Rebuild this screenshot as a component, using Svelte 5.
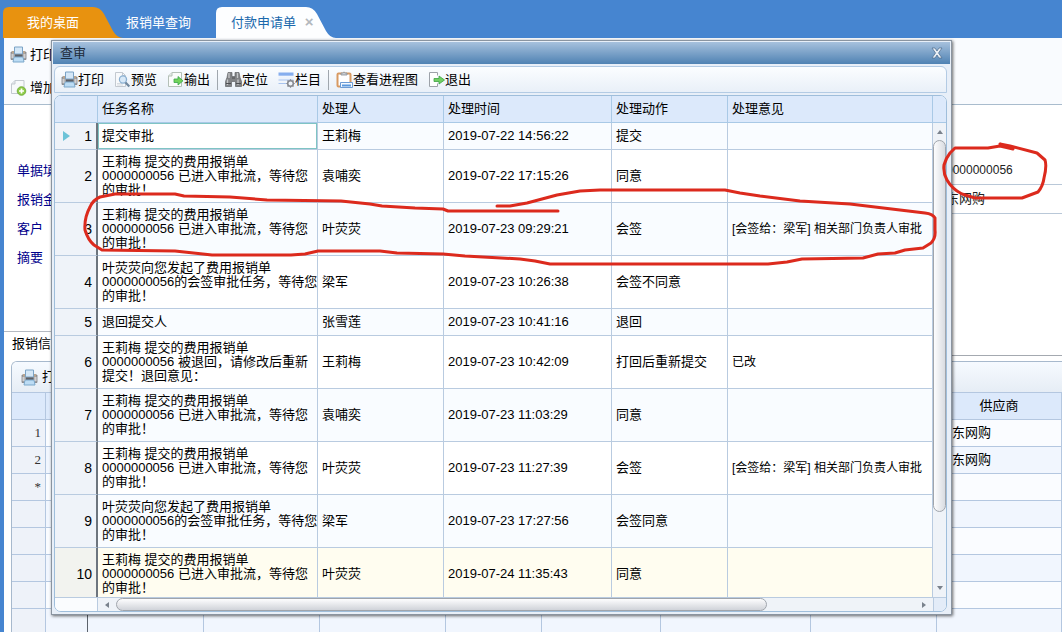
<!--
  Payment request page with the approval history window open
-->
<script lang="ts">
  type Step = {
    task: string;
    user: string;
    time: string;
    action: string;
    note?: string;
  };

  const submitted = '王莉梅 提交的费用报销单\n0000000056 已进入审批流，等待您\n的审批！';
  const countersign = '叶荧荧向您发起了费用报销单\n0000000056的会签审批任务，等待您\n的审批！';
  const returned = '王莉梅 提交的费用报销单\n0000000056 被退回，请修改后重新\n提交！退回意见：';

  const steps: Step[] = [
    { task: '提交审批', user: '王莉梅', time: '2019-07-22 14:56:22', action: '提交' },
    { task: submitted, user: '袁哺奕', time: '2019-07-22 17:15:26', action: '同意' },
    { task: submitted, user: '叶荧荧', time: '2019-07-23 09:29:21', action: '会签', note: '[会签给：梁军] 相关部门负责人审批' },
    { task: countersign, user: '梁军', time: '2019-07-23 10:26:38', action: '会签不同意' },
    { task: '退回提交人', user: '张雪莲', time: '2019-07-23 10:41:16', action: '退回' },
    { task: returned, user: '王莉梅', time: '2019-07-23 10:42:09', action: '打回后重新提交', note: '已改' },
    { task: submitted, user: '袁哺奕', time: '2019-07-23 11:03:29', action: '同意' },
    { task: submitted, user: '叶荧荧', time: '2019-07-23 11:27:39', action: '会签', note: '[会签给：梁军] 相关部门负责人审批' },
    { task: countersign, user: '梁军', time: '2019-07-23 17:27:56', action: '会签同意' },
    { task: submitted, user: '叶荧荧', time: '2019-07-24 11:35:43', action: '同意' }
  ];

  const tools = [
    [
      { icon: 'print', text: '打印' },
      { icon: 'preview', text: '预览' },
      { icon: 'export', text: '输出' }
    ],
    [
      { icon: 'locate', text: '定位' },
      { icon: 'columns', text: '栏目' }
    ],
    [
      { icon: 'flow', text: '查看进程图' },
      { icon: 'exit', text: '退出' }
    ]
  ];

  const lines = [
    { no: '1', supplier: '京东网购' },
    { no: '2', supplier: '京东网购' },
    { no: '*', supplier: '' },
    { no: '', supplier: '' },
    { no: '', supplier: '' },
    { no: '', supplier: '' },
    { no: '', supplier: '' },
    { no: '', supplier: '' }
  ];
</script>

{#snippet icon(name: string)}
  <svg class="icon" viewBox="0 0 17 17" aria-hidden="true">
    {#if name === 'print'}
      <path d="M1 6h15v7.500H1z" fill="#a3a3a5" stroke="#808286" stroke-width=".8" />
      <path d="M2 5h13v2.500H2z" fill="#b9a58f" />
      <path d="M4.500 1h8v7h-8z" fill="#d4e7f7" stroke="#7ba3c6" />
      <path d="M5 8.500h7.500v2.500H5z" fill="#5c6068" />
      <path d="M4 11h9l1 5H3z" fill="#bcdcf4" stroke="#7ba7ca" />
      <path d="M1.500 8h2v4h-2zM13.500 8h2v4h-2z" fill="#d0d0d2" />
    {:else if name === 'preview'}
      <path d="M1.500 1.500h7l3 3v11h-10z" fill="#f7f9fb" stroke="#c3c9d0" />
      <path d="M8.500 1.500v3h3" fill="none" stroke="#c3c9d0" />
      <path d="M3 12.500h5M3 14h6" stroke="#d5dadf" />
      <circle cx="9" cy="8.500" r="3.600" fill="#cfe5f7" fill-opacity=".8" stroke="#8ab0d2" stroke-width="1.200" />
      <path d="M11.500 11.500l3.800 4" stroke="#70889f" stroke-width="2.200" />
    {:else if name === 'export'}
      <path d="M5 1.500h9.500v14H1.500V5z" fill="#fbfcfb" stroke="#b4c0b7" />
      <path d="M5 1.500V5H1.500" fill="#e4ece6" stroke="#b4c0b7" />
      <path d="M7 8h4V5.500l5 4.300-5 4.200v-2.500H7z" fill="#72d45b" stroke="#3aa64a" stroke-width=".8" />
    {:else if name === 'locate'}
      <path d="M3 1.500h4v4h3v-4h4l1 5 1.500 4v5h-6v-5h-4v5H.500v-5L2 6.500z" fill="#808285" stroke="#626467" stroke-width=".7" />
      <path d="M4 2v5M12.500 2v5M2.500 8.500v5.500M13 8.500v5.500" stroke="#c5c7c9" stroke-width="1.300" />
      <path d="M1 12.500h5M11 12.500h5M7 7h3" stroke="#4c4e51" />
    {:else if name === 'columns'}
      <path d="M.500 1.500h15v3.200H.500z" fill="#86aeee" />
      <path d="M.500 5.500h15v3H.500z" fill="#edf3fc" />
      <path d="M.500 9h15M.500 12.500h8" stroke="#a9c4ee" />
      <circle cx="12.500" cy="12.500" r="2.800" fill="none" stroke="#85888e" stroke-width="1.500" />
      <path d="M12.500 8.300v1.500M12.500 15.200v1.500M8.300 12.500h1.500M15.200 12.500h1.500M9.500 9.500l1 1M14.500 14.500l1 1M15.500 9.500l-1 1M10.500 14.500l-1 1" stroke="#85888e" stroke-width="1.200" />
    {:else if name === 'flow'}
      <rect x="1.500" y="2.500" width="13" height="13" rx="1" fill="#fff" stroke="#d89a62" stroke-width="2" />
      <path d="M5 4V2h1.500Q8 0 9.500 2H11v2z" fill="#c9cdd2" stroke="#888d94" stroke-width=".8" />
      <path d="M4.500 11.500h12v5h-12z" fill="#f4f9ff" stroke="#6c9bd4" />
      <path d="M6 14.500h9" stroke="#5b98dd" stroke-width="2" />
    {:else if name === 'exit'}
      <path d="M9.500 4.500v-3h-8v14h8v-3" fill="#fff" stroke="#9da2a9" />
      <path d="M6 7.500h5V5l5.500 4-5.500 4v-2.500H6z" fill="#72d064" stroke="#3ea244" stroke-width=".8" />
    {:else if name === 'add'}
      <path d="M5 1.500h9v13H1.500V5z" fill="#f7f9fb" stroke="#c3c9d0" />
      <path d="M5 1.500V5H1.500" fill="#e3e7eb" stroke="#c3c9d0" />
      <circle cx="11.500" cy="12" r="4.300" fill="#8ecb48" stroke="#68a634" stroke-width=".8" />
      <path d="M11.500 9.500v5M9 12h5" stroke="#fff" stroke-width="1.700" />
    {/if}
  </svg>
{/snippet}

<div class="app">
  <nav class="tabs">
    <button class="tab tab-home">我的桌面</button>
    <button class="tab tab-plain">报销单查询</button>
    <button class="tab tab-active">付款申请单 <span class="tab-close">×</span></button>
  </nav>

  <main class="page">
    <div class="page-tools">
      <button class="tool">{@render icon('print')}打印</button>
      <button class="tool">{@render icon('add')}增加</button>
    </div>

    <form class="form">
      <div class="field-row">
        <label for="f-date">单据填</label>
        <input id="f-date" />
        <input class="side" value="0000000056" aria-label="单据编号" />
      </div>
      <div class="field-row">
        <label for="f-amount">报销金</label>
        <input id="f-amount" />
        <input class="side side-name" value="京东网购" aria-label="供应商" />
      </div>
      <div class="field-row half">
        <label for="f-client">客户</label>
        <input id="f-client" />
      </div>
      <div class="field-row half">
        <label for="f-summary">摘要</label>
        <input id="f-summary" />
      </div>
    </form>

    <div class="section-tabs"><button class="section-tab">报销信息</button></div>

    <section class="detail">
      <div class="detail-tools">
        <button class="tool">{@render icon('print')}打印</button>
      </div>
      <table class="lines">
        <colgroup>
          <col class="l-no" /><col class="l-a" /><col class="l-b" /><col class="l-b" /><col class="l-c" />
          <col class="l-d" /><col class="l-e" /><col class="l-f" /><col class="l-c" /><col />
        </colgroup>
        <thead>
          <tr>
            {#each Array(9) as _}<th></th>{/each}
            <th>供应商</th>
          </tr>
        </thead>
        <tbody>
          {#each lines as line}
            <tr>
              <td class="line-no">{line.no}</td>
              {#each Array(8) as _}<td></td>{/each}
              <td>{line.supplier}</td>
            </tr>
          {/each}
        </tbody>
      </table>
    </section>
  </main>

  <div class="dialog" role="dialog" aria-labelledby="dialog-title">
    <header class="dialog-head">
      <span id="dialog-title">查审</span>
      <button class="dialog-close" aria-label="关闭">
        <svg viewBox="0 0 12 12"><path d="M1 1h3l2 3 2-3h3L7.500 6 11 11H8L6 8l-2 3H1l3.500-5z" fill="#e9eef4" stroke="#4a6a8c" stroke-width=".7" /></svg>
      </button>
    </header>

    <div class="dialog-tools">
      {#each tools as group, i}
        {#if i > 0}<span class="divider"></span>{/if}
        {#each group as tool}
          <button class="tool">{@render icon(tool.icon)}{tool.text}</button>
        {/each}
      {/each}
    </div>

    <div class="grid">
      <div class="view">
        <table class="steps">
          <colgroup>
            <col class="c-no" /><col class="c-task" /><col class="c-user" /><col class="c-time" /><col class="c-action" /><col />
          </colgroup>
          <thead>
            <tr>
              <th></th>
              <th>任务名称</th>
              <th>处理人</th>
              <th>处理时间</th>
              <th>处理动作</th>
              <th>处理意见</th>
            </tr>
          </thead>
          <tbody>
            {#each steps as step, i}
              <tr class:short={!step.task.includes('\n')} class:last={i === steps.length - 1}>
                <td class="no">
                  <div class="no-inner">
                    {#if i === 0}<span class="marker"></span>{/if}
                    <span class="no-text">{i + 1}</span>
                  </div>
                </td>
                <td class:current={i === 0}>{step.task}</td>
                <td>{step.user}</td>
                <td>{step.time}</td>
                <td>{step.action}</td>
                <td class="note">{step.note ?? ''}</td>
              </tr>
            {/each}
          </tbody>
        </table>
      </div>
      <div class="vside">
        <div class="vside-head"></div>
        <div class="vbar">
          <span class="arrow up"></span>
          <span class="vthumb"></span>
          <span class="vrest"></span>
          <span class="arrow down"></span>
        </div>
      </div>
      <div class="hside">
        <div class="hside-head"></div>
        <div class="hbar">
          <span class="arrow left"></span>
          <span class="hthumb"></span>
          <span class="hrest"></span>
          <span class="arrow right"></span>
        </div>
      </div>
      <div class="corner"></div>
    </div>
  </div>

  <!-- hand-drawn marks round step 3 and the document number -->
  <svg class="ink" width="1062" height="632" viewBox="0 0 1062 632" aria-hidden="true">
    <path d="M558 211H448L443 209 415 208 382 206 370 204 341 201 267 200 230 197 184 196 175 194H115L100 197Q93 200 90 207 84 218 85 230 88 240 94 245L102 250 175 251 212 255H291L305 254 318 251H380L397 253 443 254 465 256 520 259 535 261 550 264H768L787 262 802 259 863 258 878 254 895 253 905 250 923 248 931 243Q936 238 935 230V218Q933 214 925 213L850 204 800 201 760 196 740 193 725 190H600L580 191 557 195 527 203 510 206H497" />
    <path d="M1013 148L1000 144 1010 146 1037 153 1045 160Q1047 166 1044 178 1043 186 1038 192L1022 198H975L962 194Q952 189 947 180 943 173 944 165 946 158 950 153L955 148H988L1000 146 1013 149" />
  </svg>
</div>

<style>
  :global(body) {
    margin: 0;
  }

  .app {
    position: relative;
    display: flex;
    flex-direction: column;
    height: 100vh;
    overflow: hidden;
    background: #4685d0;
    color: #000;
    font-family: 'Liberation Sans', 'Noto Sans CJK SC', sans-serif;
    font-size: 13px;
    line-height: 14px;
  }

  .app * {
    box-sizing: border-box;
  }

  button,
  input {
    margin: 0;
    padding: 0;
    border: 0;
    background: none;
    color: inherit;
    font: inherit;
  }

  table {
    width: 100%;
    table-layout: fixed;
    border-spacing: 0;
  }

  th {
    font-weight: 400;
  }

  /* top tabs */
  .tabs {
    display: flex;
    flex: none;
    height: 38px;
    padding: 7px 0 0 3px;
  }

  .tab {
    width: 120px;
    height: 31px;
    color: #fff;
    text-align: left;
    white-space: nowrap;
    clip-path: path('M0 31V6Q0 0 6 0H90Q97 0 101 7L110 24Q114 31 120 31Z');
  }

  .tab-home {
    padding-left: 24px;
    background: #e8920f;
  }

  .tab-plain {
    width: 93px;
    padding-left: 3px;
    clip-path: none;
  }

  .tab-active {
    padding-left: 15px;
    background: #fdfeff;
    color: #1a68ac;
  }

  .tab-close {
    margin-left: 5px;
    color: #b4b8bd;
    font-size: 15px;
    font-weight: 700;
  }

  /* page under the window */
  .page {
    display: flex;
    flex: 1;
    flex-direction: column;
    min-height: 0;
    margin-left: 4px;
    background: #fff;
  }

  .tool {
    display: flex;
    align-items: center;
    white-space: nowrap;
  }

  .icon {
    flex: none;
    width: 17px;
    height: 17px;
  }

  .page-tools {
    flex: none;
    height: 67px;
    padding-left: 6px;
    border-bottom: 1px solid #a9bccd;
    background: #f9fbfe;
  }

  .page-tools .tool {
    gap: 3px;
    height: 33px;
  }

  .form {
    flex: none;
    height: 226px;
    padding: 51px 0 0 13px;
  }

  .field-row {
    display: flex;
    height: 29px;
  }

  .field-row label {
    width: 40px;
    color: #00008b;
    line-height: 29px;
  }

  .field-row input {
    flex: 1;
    min-width: 0;
    border-bottom: 1px solid #b9c8d8;
  }

  .field-row .side {
    flex: none;
    width: 116px;
    color: #222;
    font-size: 12px;
  }

  .field-row .side-name {
    width: 129px;
    font-size: 13px;
  }

  .half {
    margin-right: 129px;
  }

  .section-tabs {
    flex: none;
    height: 25px;
    border-bottom: 1px solid #a4a9b0;
  }

  .section-tab {
    height: 25px;
    padding: 0 8px;
    border: solid #b5bac2;
    border-width: 1px 1px 0 0;
    background: #fff;
  }

  .detail {
    flex: 1;
    min-height: 0;
    margin: 5px 0 0 7px;
    overflow: hidden;
    border: solid #a7b9cd;
    border-width: 1px 0 0 1px;
    border-radius: 6px 0 0 0;
    background: #fff;
  }

  .detail-tools {
    display: flex;
    height: 30px;
    padding-left: 9px;
    background: linear-gradient(#f6faff, #e6edf5);
  }

  .detail-tools .tool {
    gap: 4px;
  }

  .lines th,
  .lines td {
    height: 27px;
    padding: 0 2px;
    border: solid #b4c7e0;
    border-width: 0 1px 1px 0;
    white-space: nowrap;
  }

  .lines th {
    height: 28px;
    border-top: 1px solid #b4c7e0;
    background: #dce9fb;
  }

  .lines tbody tr:nth-child(odd) {
    background: #fafcff;
  }

  .lines tbody tr:nth-child(even) {
    background: #f1f6fe;
  }

  .lines td:nth-child(2) {
    border-right-color: #5c636c;
  }

  .lines .line-no {
    padding-right: 4px;
    background: #eef2f9;
    color: #333;
    font-family: 'Liberation Serif', serif;
    text-align: right;
  }

  .l-no { width: 34px; }
  .l-a { width: 42px; }
  .l-b { width: 116px; }
  .l-c { width: 126px; }
  .l-d { width: 96px; }
  .l-e { width: 119px; }
  .l-f { width: 150px; }

  /* approval window */
  .dialog {
    position: absolute;
    inset: 40px 110px 17px 51px;
    display: flex;
    flex-direction: column;
    padding: 2px 4px 2px 2px;
    border: 1px solid #8a94a0;
    background: #e8eff8;
    box-shadow: 1px 1px 3px rgba(0, 0, 0, 0.6);
  }

  .dialog-head {
    display: flex;
    flex: none;
    align-items: center;
    justify-content: space-between;
    height: 22px;
    margin: -1px -3px 0 -1px;
    padding: 0 7px;
    background: linear-gradient(#a7c1dd, #4f82b3);
    color: #1d2b3a;
  }

  .dialog-close {
    display: flex;
  }

  .dialog-close svg {
    width: 12px;
    height: 12px;
  }

  .dialog-tools {
    display: flex;
    flex: none;
    align-items: center;
    gap: 10px;
    height: 27px;
    margin: 2px 0;
    padding-left: 6px;
    border: 1px solid #b3cbe4;
    border-radius: 6px 6px 0 0;
    background: linear-gradient(#fbfdff, #e9f0f8);
  }

  .divider {
    width: 1px;
    height: 20px;
    margin: 0 -3px;
    background: #a0a7ae;
  }

  .grid {
    display: grid;
    flex: 1;
    grid-template-rows: minmax(0, 1fr) 14px;
    grid-template-columns: minmax(0, 1fr) 13px;
    min-height: 0;
    overflow: hidden;
    border: 1px solid #9fbedb;
    border-radius: 7px;
    background: #fff;
  }

  .view {
    overflow: hidden;
  }

  .steps th,
  .steps td {
    height: 53px;
    padding: 0 0 0 4px;
    border: solid #b9cbe0;
    border-width: 0 1px 1px 0;
    text-align: left;
    white-space: pre;
  }

  .steps th {
    height: 27px;
    border-color: #a9c9e6;
    background: #dce9fb;
  }

  .steps tbody tr:nth-child(odd) {
    background: #f9fcff;
  }

  .steps .short td {
    height: 27px;
  }

  .steps tbody .last {
    background: #fffdf0;
  }

  .steps .note {
    font-size: 12px;
  }

  .steps .no {
    padding: 0 4px 0 8px;
    border-right: 2px solid #6d757e;
    background: #eff3f9;
    font-size: 14px;
  }

  .steps .last .no {
    background: #f2f3ef;
  }

  .no-inner {
    display: flex;
    align-items: center;
  }

  .no-text {
    margin-left: auto;
  }

  .marker {
    border: solid transparent;
    border-width: 5px 0 5px 7px;
    border-left-color: #6cc3d8;
  }

  .steps .current {
    background: #fff;
    box-shadow: inset -1px 1px #7fc4c4, inset 1px -1px #7fc4c4;
  }

  .c-no { width: 43px; }
  .c-task { width: 220px; }
  .c-user { width: 126px; }
  .c-time { width: 168px; }
  .c-action { width: 116px; }

  .vside {
    display: flex;
    flex-direction: column;
  }

  .vside-head {
    height: 27px;
    border-bottom: 1px solid #a9c9e6;
    background: #dce9fb;
  }

  .vbar {
    display: flex;
    flex: 1;
    flex-direction: column;
    align-items: center;
    background: #eff3f8;
  }

  .vthumb {
    flex: 376;
    width: 13px;
    border: 1px solid #a0a5ac;
    border-radius: 7px;
    background: linear-gradient(90deg, #fdfdfe, #d9dce1);
  }

  .vrest {
    flex: 69;
  }

  .hside {
    display: flex;
    border-top: 1px solid #b9cbe0;
  }

  .hside-head {
    width: 43px;
    border-right: 1px solid #b9cbe0;
    background: #fafcfe;
  }

  .hbar {
    display: flex;
    flex: 1;
    align-items: center;
    background: #eff3f8;
  }

  .hthumb {
    flex: 652;
    height: 13px;
    border: 1px solid #a0a5ac;
    border-radius: 7px;
    background: linear-gradient(#fdfdfe, #d0d3d9);
  }

  .hrest {
    flex: 149;
  }

  .corner {
    border: solid #b9cbe0;
    border-width: 1px 0 0 1px;
    background: #e3ecf8;
  }

  .arrow {
    flex: none;
    border: 0 solid transparent;
  }

  .up {
    margin: 7px 0 6px;
    border-width: 0 3px 4px;
    border-bottom-color: #7a828c;
  }

  .down {
    margin: 6px 0 7px;
    border-width: 4px 3px 0;
    border-top-color: #7a828c;
  }

  .left {
    margin: 0 7px;
    border-width: 3px 4px 3px 0;
    border-right-color: #7a828c;
  }

  .right {
    margin: 0 7px;
    border-width: 3px 0 3px 4px;
    border-left-color: #7a828c;
  }

  .ink {
    position: absolute;
    top: 0;
    left: 0;
    pointer-events: none;
  }

  .ink path {
    fill: none;
    stroke: #dc2a1d;
    stroke-width: 3;
    stroke-linecap: round;
    stroke-linejoin: round;
  }
</style>
